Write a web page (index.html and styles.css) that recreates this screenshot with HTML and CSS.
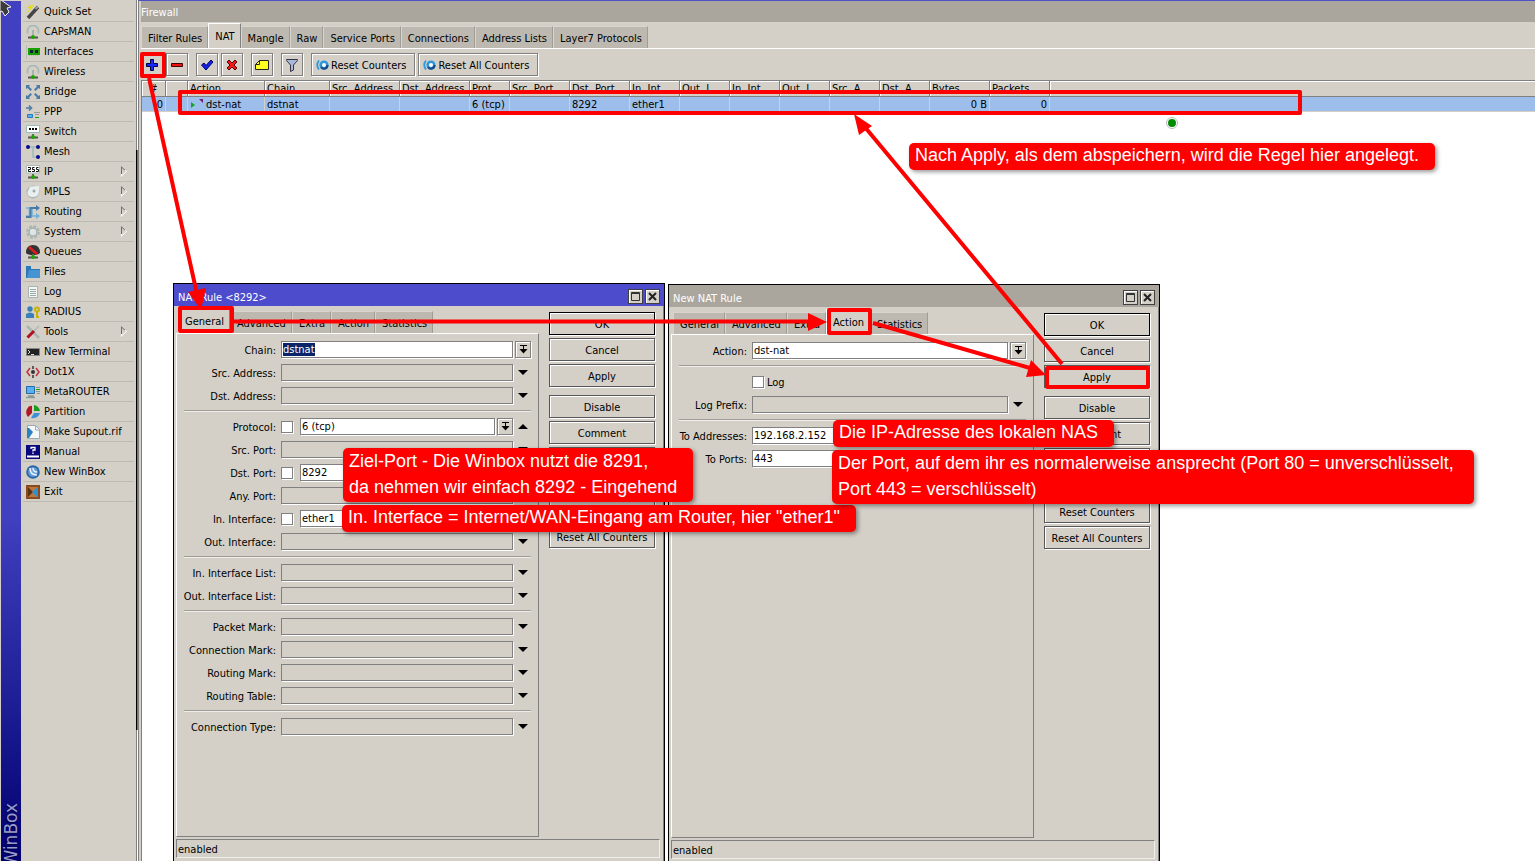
FILE: index.html
```html
<!DOCTYPE html>
<html lang="de">
<head>
<meta charset="utf-8">
<title>WinBox - Firewall NAT</title>
<link rel="stylesheet" href="styles.css">
</head>
<body>
<svg class="defs" aria-hidden="true">
  <defs>
    <g id="stand"><path d="M2 12.500h10" stroke="#555" stroke-width="2"/><path d="M7 9v3" stroke="#666" stroke-width="2"/><circle cx="7" cy="12" r="2" fill="#1fa400"/></g>
    <g id="antenna"><path d="M1.500 8.500V6a5.500 5.500 0 0 1 11 0v2.500" fill="none" stroke="#a9b9b9" stroke-width="1.800"/><path d="M7 5v5" stroke="#9aa" stroke-width="1.500"/><path d="M2 12.500h10" stroke="#555" stroke-width="2"/><circle cx="7" cy="12" r="2" fill="#1fa400"/></g>
    <g id="swirl"><path d="M3 1.500Q-.5 6 3 10.500" fill="none" stroke="#2b9be0" stroke-width="1.800"/><circle cx="8" cy="6" r="3.300" fill="#fff" stroke="#2f96dc" stroke-width="2.600"/><path d="M5 8a3.500 3.500 0 0 0 6.500-2" fill="none" stroke="#164a8c" stroke-width="2"/></g>
    <g id="drop"><path d="M1 .5h7M4.500 1v4" fill="none" stroke="#000"/><path d="M4 2h1v3H4z"/><path d="M.5 4h8L4.500 8.500z"/></g>
  </defs>
</svg>
<div class="desktop">
  <div class="brand"><span>WinBox</span></div>
  <nav class="menu">
    <button><svg viewBox="0 0 14 14"><path d="M2 13 12 2" stroke="#444" stroke-width="3.500"/><path d="M9.500 4 12 1.500" stroke="#999" stroke-width="2"/><path d="M4 0v5M1.500 2.500h5M1 7l2-1M7 0l-1 1" stroke="#e3dc00" stroke-width="1.300"/></svg>Quick Set</button>
    <button><svg viewBox="0 0 14 14"><use href="#antenna"/></svg>CAPsMAN</button>
    <button><svg viewBox="0 0 14 14"><path d="M.5 0v14" stroke="#b5bcbc"/><path d="M2 3h12v7H2z" fill="#18a000"/><path d="M4 5h3v3H4zM9 5h3v3H9z" fill="#123"/><path d="M3 10.500h10" stroke="#d8c800" stroke-dasharray="1 1"/></svg>Interfaces</button>
    <button><svg viewBox="0 0 14 14"><use href="#antenna"/></svg>Wireless</button>
    <button><svg viewBox="0 0 14 14"><path d="M0 0h4L3 1.500 6 4.500 4.500 6 1.500 3 0 4zM14 0h-4l1 1.500-3 3L9.500 6l3-3L14 4zM0 14h4l-1-1.500 3-3L4.500 8l-3 3L0 10zM14 14h-4l1-1.500-3-3L9.500 8l3 3 1.500-1z" fill="#4a7aa6"/></svg>Bridge</button>
    <button><svg viewBox="0 0 14 14"><path d="M0 3h4M3 .5 5.500 3 3 5.500" fill="none" stroke="#4a7aa6" stroke-width="1.600"/><path d="M1.500 9.500h5v3h-5z" fill="#5ab0e8" stroke="#2a78b8"/><path d="M8 7.500h6M9 9.500h4" stroke="#999"/><path d="M9 12.500h4" stroke="#1fa400"/></svg>PPP</button>
    <button><svg viewBox="0 0 14 14"><path d="M.5.5h13v7H.5z" fill="#fff" stroke="#9bb"/><path d="M3 4h8" stroke="#000" stroke-width="2" stroke-dasharray="2 1"/><use href="#stand"/></svg>Switch</button>
    <button><svg viewBox="0 0 14 14"><path d="M2 2h10M7 2v10h5" fill="none" stroke="#9bb" stroke-width="1.500"/><circle cx="2" cy="2" r="2" fill="#0a0a90"/><circle cx="12" cy="2" r="2" fill="#0a0a90"/><circle cx="12" cy="12" r="2" fill="#0a0a90"/></svg>Mesh</button>
    <button><svg viewBox="0 0 14 14"><path d="M.5.5h13v7.500H.5z" fill="#fff" stroke="#abb"/><path d="M2 2.500h2.500v2h-2v2H5M8.500 2.500h-2v2h2v2H6M12.500 2.500h-2v2h2v2H10" fill="none" stroke="#111"/><use href="#stand"/></svg>IP<span class="more"></span></button>
    <button><svg viewBox="0 0 14 14"><circle cx="7" cy="7" r="6.500" fill="#a9b5b5"/><path d="M4 1.500 13 1v6a6 6 0 0 1-6 5Q1 12 1.500 7z" fill="#e9eeee"/><circle cx="8" cy="6" r="1.500" fill="#9aa"/></svg>MPLS<span class="more"></span></button>
    <button><svg viewBox="0 0 14 14"><path d="M0 3h3.500v8H0M6 3v8h5" fill="none" stroke="#88b8d8" stroke-width="2"/><path d="M0 12h4.500V3H10" fill="none" stroke="#4a7aa6" stroke-width="2"/><path d="M10 0l4 3-4 3z" fill="#4a7aa6"/><path d="M10 8l4 3-4 3z" fill="#6cb0dc"/></svg>Routing<span class="more"></span></button>
    <button><svg viewBox="0 0 14 14"><circle cx="7" cy="7" r="5.800" fill="none" stroke="#a9b5b5" stroke-width="2" stroke-dasharray="3 1.500"/><circle cx="7" cy="7" r="4" fill="#e0e4e2" stroke="#9fadad" stroke-width="1.300"/></svg>System<span class="more"></span></button>
    <button><svg viewBox="0 0 14 14"><path d="M0 8Q0 0 7 0t7 8q-2 2-7 2T0 8z" fill="#333"/><path d="M3 2l8 7" stroke="#e01c1c" stroke-width="2.500"/><use href="#stand"/></svg>Queues</button>
    <button><svg viewBox="0 0 14 14"><path d="M0 1h5v3h9v9H0z" fill="#2a78b8"/><path d="M3 5h11v8H1z" fill="#4593d0"/></svg>Files</button>
    <button><svg viewBox="0 0 14 14"><path d="M2.500 1.500h9v11h-9z" fill="#f4f6f6" stroke="#a9b5b5"/><path d="M4 4.500h6M4 6.500h6M4 8.500h6M4 10.500h6" stroke="#9aa"/></svg>Log</button>
    <button><svg viewBox="0 0 14 14"><circle cx="4" cy="4" r="2.700" fill="#3a80b8"/><path d="M0 13V9q4-3 8 0v4z" fill="#3a80b8"/><circle cx="11" cy="4.500" r="2" fill="none" stroke="#c8b400" stroke-width="2"/><path d="M11 7v6M11 12h2" stroke="#c8b400" stroke-width="2"/></svg>RADIUS</button>
    <button><svg viewBox="0 0 14 14"><path d="M1 1l5 5 7 7" stroke="#a9b5b5" stroke-width="2.500"/><path d="M13 1 8 6" stroke="#b4bebe" stroke-width="2"/><path d="M8 6 1.500 12.500" stroke="#b01020" stroke-width="3"/></svg>Tools<span class="more"></span></button>
    <button><svg viewBox="0 0 14 14"><path d="M.5 3.500h13v7H.5z" fill="#222" stroke="#888"/><path d="M2 5l2 2-2 2M5 9.500h3" fill="none" stroke="#ddd"/></svg>New Terminal</button>
    <button><svg viewBox="0 0 14 14"><path d="M4 3 1 7l3 4M10 3l3 4-3 4" fill="none" stroke="#c03040" stroke-width="1.500"/><path d="M7 1v3M7 10v3" stroke="#333" stroke-width="1.500"/><circle cx="7" cy="7" r="2" fill="#333"/></svg>Dot1X</button>
    <button><svg viewBox="0 0 14 14"><path d="M.5 1.500h8v7h-8z" fill="#58b0f0" stroke="#2468a8"/><path d="M2 11h6M0 12.500h9" stroke="#8a9a9a" stroke-width="1.500"/><path d="M10 2.500h4M10 6.500h4M11 8.500h3" stroke="#8a9a9a"/><path d="M10 4.500h4" stroke="#1fa400"/></svg>MetaROUTER</button>
    <button><svg viewBox="0 0 14 14"><path d="M6 1v7l-4 4Q-1 8 1 4t5-3z" fill="#b01828"/><path d="M8 0q5 1 6 6H8z" fill="#1c9c1c"/><path d="M8 8h6q-2 6-9 5z" fill="#3c90d8"/></svg>Partition</button>
    <button><svg viewBox="0 0 14 14"><path d="M1.500.5h8l4 4v9h-12z" fill="#f4f8f8" stroke="#9ab"/><path d="M1 3h2l4 4-4 6H1z" fill="#2a80c0"/><path d="M9.500 1v4h4" fill="none" stroke="#9ab"/></svg>Make Supout.rif</button>
    <button><svg viewBox="0 0 14 14"><path d="M0 0h14v14H0z" fill="#08087c"/><path d="M1 11.500h12" stroke="#fff" stroke-width="2"/><path d="M5 4V2.500h4V5H7v1.500M7 7.500V9" fill="none" stroke="#fff" stroke-width="1.300"/></svg>Manual</button>
    <button><svg viewBox="0 0 14 14"><circle cx="7" cy="7" r="6.800" fill="#2a68a8"/><circle cx="7" cy="7" r="4.800" fill="#68a0d8"/><path d="M4 3q0 7 7 7M7 3q0 4 4 4" fill="none" stroke="#eef" stroke-width="1.500"/></svg>New WinBox</button>
    <button><svg viewBox="0 0 14 14"><path d="M0 0h14v14H0z" fill="#8a4a1c"/><path d="M2 2h10v10H2z" fill="#b87840"/><path d="M2 2l5 5-5 5" fill="#5c3010"/><path d="M12 2v11L6 7z" fill="#2e90d0"/></svg>Exit</button>
  </nav>
  <div class="splitter"><i></i></div>

  <main class="firewall">
    <h1 class="title">Firewall</h1>
    <div class="tabs" role="tablist">
      <button role="tab">Filter Rules</button><button role="tab" class="on" aria-selected="true">NAT</button><button role="tab">Mangle</button><button role="tab">Raw</button><button role="tab">Service Ports</button><button role="tab">Connections</button><button role="tab">Address Lists</button><button role="tab">Layer7 Protocols</button>
    </div>
    <div class="toolbar">
      <button class="tool" aria-label="Add"><svg viewBox="0 0 14 14"><path d="M5.500 1.500h3v4h4v3h-4v4h-3v-4h-4v-3h4z" fill="#1428ff" stroke="#000040"/></svg></button>
      <button class="tool" aria-label="Remove"><svg viewBox="0 0 14 14"><path d="M1.500 5.500h11v3h-11z" fill="#f01010" stroke="#400"/></svg></button>
      <button class="tool group" aria-label="Enable"><svg viewBox="0 0 14 14"><path d="M1.500 7 4 5l2 2.500L11 2l2 2-7 8z" fill="#1020f0" stroke="#000060"/></svg></button>
      <button class="tool" aria-label="Disable"><svg viewBox="0 0 14 14"><path d="M2 4l2-2 3 3 3-3 2 2-3 3 3 3-2 2-3-3-3 3-2-2 3-3z" fill="#f01818" stroke="#500"/></svg></button>
      <button class="tool group" aria-label="Comment"><svg viewBox="0 0 14 14"><path d="M4.500 2.500h9v9H.5v-5z" fill="#ffff20" stroke="#222"/><path d="M4.500 2.500v4h-4" fill="none" stroke="#222"/></svg></button>
      <button class="tool group" aria-label="Filter"><svg viewBox="0 0 14 14"><path d="M1.500 1.500h11v1L8.500 7v5l-3 1.500V7l-4-4.500z" fill="#a8b8d8" stroke="#334"/></svg></button>
      <button class="tool wide group"><svg viewBox="0 0 14 12"><use href="#swirl"/></svg>Reset Counters</button>
      <button class="tool wide"><svg viewBox="0 0 14 12"><use href="#swirl"/></svg>Reset All Counters</button>
    </div>
    <div class="list">
      <table>
        <colgroup><col class="c-num"><col class="c-flag"><col class="c-action"><col class="c-chain"><col class="c-addr"><col class="c-addr"><col class="c-prot"><col class="c-port"><col class="c-port"><col class="c-if"><col class="c-if"><col class="c-if"><col class="c-if"><col class="c-if"><col class="c-if"><col class="c-port"><col class="c-port"><col></colgroup>
        <thead><tr><th class="num">#</th><th></th><th>Action</th><th>Chain</th><th>Src. Address</th><th>Dst. Address</th><th>Prot...</th><th>Src. Port</th><th>Dst. Port</th><th>In. Int...</th><th>Out. I...</th><th>In. Int...</th><th>Out. I...</th><th>Src. A...</th><th>Dst. A...</th><th>Bytes</th><th>Packets</th><th></th></tr></thead>
        <tbody><tr><td class="num">0</td><td></td><td><svg class="rule-icon" viewBox="0 0 14 12"><path d="M1 4l4 3-4 3z" fill="#10a820"/><path d="M7.500 1v10" stroke="#b9b9b9"/><path d="M9 1h4v4z" fill="#702070"/></svg>dst-nat</td><td>dstnat</td><td></td><td></td><td>6 (tcp)</td><td></td><td>8292</td><td>ether1</td><td></td><td></td><td></td><td></td><td></td><td class="num">0 B</td><td class="num">0</td><td></td></tr></tbody>
      </table>
    </div>
  </main>

  <section class="dialog rule">
    <header class="bar"><h2>NAT Rule &lt;8292&gt;</h2><button aria-label="Maximize"><svg viewBox="0 0 13 13"><path d="M2.500 2.500h8v8h-8zM2 3.500h9" fill="none" stroke="#333"/></svg></button><button aria-label="Close"><svg viewBox="0 0 13 13"><path d="M3 3l7 7M10 3l-7 7" stroke="#222" stroke-width="2"/></svg></button></header>
    <div class="content">
      <div class="left">
        <div class="tabs" role="tablist"><button role="tab" class="on" aria-selected="true">General</button><button role="tab">Advanced</button><button role="tab">Extra</button><button role="tab">Action</button><button role="tab">Statistics</button></div>
        <form class="page">
          <div class="row"><label for="chain">Chain:</label><input type="text" id="chain" value="dstnat" autofocus><button type="button" class="pick" aria-label="Choose chain"><svg viewBox="0 0 9 9"><use href="#drop"/></svg></button></div>
          <div class="row"><label for="srca">Src. Address:</label><input type="text" id="srca" class="off"><button type="button" class="arrow" aria-label="Open"></button></div>
          <div class="row"><label for="dsta">Dst. Address:</label><input type="text" id="dsta" class="off"><button type="button" class="arrow" aria-label="Open"></button></div>
          <hr>
          <div class="row"><label for="proto">Protocol:</label><input type="checkbox" aria-label="Not protocol"><input type="text" id="proto" value="6 (tcp)"><button type="button" class="pick" aria-label="Choose protocol"><svg viewBox="0 0 9 9"><use href="#drop"/></svg></button><button type="button" class="arrow up" aria-label="Close"></button></div>
          <div class="row"><label for="srcp">Src. Port:</label><input type="text" id="srcp" class="off"><button type="button" class="arrow" aria-label="Open"></button></div>
          <div class="row"><label for="dstp">Dst. Port:</label><input type="checkbox" aria-label="Not port"><input type="text" id="dstp" value="8292"><button type="button" class="arrow up" aria-label="Close"></button></div>
          <div class="row"><label for="anyp">Any. Port:</label><input type="text" id="anyp" class="off"><button type="button" class="arrow" aria-label="Open"></button></div>
          <div class="row"><label for="inif">In. Interface:</label><input type="checkbox" aria-label="Not interface"><input type="text" id="inif" value="ether1"><button type="button" class="arrow up" aria-label="Close"></button></div>
          <div class="row"><label for="outif">Out. Interface:</label><input type="text" id="outif" class="off"><button type="button" class="arrow" aria-label="Open"></button></div>
          <hr>
          <div class="row"><label for="inl">In. Interface List:</label><input type="text" id="inl" class="off"><button type="button" class="arrow" aria-label="Open"></button></div>
          <div class="row"><label for="outl">Out. Interface List:</label><input type="text" id="outl" class="off"><button type="button" class="arrow" aria-label="Open"></button></div>
          <hr>
          <div class="row"><label for="pm">Packet Mark:</label><input type="text" id="pm" class="off"><button type="button" class="arrow" aria-label="Open"></button></div>
          <div class="row"><label for="cm">Connection Mark:</label><input type="text" id="cm" class="off"><button type="button" class="arrow" aria-label="Open"></button></div>
          <div class="row"><label for="rm">Routing Mark:</label><input type="text" id="rm" class="off"><button type="button" class="arrow" aria-label="Open"></button></div>
          <div class="row"><label for="rt">Routing Table:</label><input type="text" id="rt" class="off"><button type="button" class="arrow" aria-label="Open"></button></div>
          <hr>
          <div class="row"><label for="ct">Connection Type:</label><input type="text" id="ct" class="off"><button type="button" class="arrow" aria-label="Open"></button></div>
        </form>
      </div>
      <div class="actions"><button class="default">OK</button><button>Cancel</button><button>Apply</button><button class="next">Disable</button><button>Comment</button><button aria-label="Copy"></button><button aria-label="Remove"></button><button aria-label="Reset Counters"></button><button>Reset All Counters</button></div>
    </div>
    <footer>enabled</footer>
  </section>

  <section class="dialog fresh">
    <header class="bar"><h2>New NAT Rule</h2><button aria-label="Maximize"><svg viewBox="0 0 13 13"><path d="M2.500 2.500h8v8h-8zM2 3.500h9" fill="none" stroke="#333"/></svg></button><button aria-label="Close"><svg viewBox="0 0 13 13"><path d="M3 3l7 7M10 3l-7 7" stroke="#222" stroke-width="2"/></svg></button></header>
    <div class="content">
      <div class="left">
        <div class="tabs" role="tablist"><button role="tab">General</button><button role="tab">Advanced</button><button role="tab">Extra</button><button role="tab" class="on" aria-selected="true">Action</button><button role="tab">Statistics</button></div>
        <form class="page">
          <div class="row"><label for="act">Action:</label><input type="text" id="act" value="dst-nat"><button type="button" class="pick" aria-label="Choose action"><svg viewBox="0 0 9 9"><use href="#drop"/></svg></button></div>
          <hr>
          <div class="row check"><input type="checkbox" id="log"><label for="log">Log</label></div>
          <div class="row"><label for="lp">Log Prefix:</label><input type="text" id="lp" class="off"><button type="button" class="arrow" aria-label="Open"></button></div>
          <hr>
          <div class="row"><label for="toa">To Addresses:</label><input type="text" id="toa" value="192.168.2.152"><button type="button" class="arrow up" aria-label="Close"></button></div>
          <div class="row"><label for="top">To Ports:</label><input type="text" id="top" value="443"><button type="button" class="arrow up" aria-label="Close"></button></div>
        </form>
      </div>
      <div class="actions"><button class="default">OK</button><button>Cancel</button><button>Apply</button><button class="next">Disable</button><button>Comment</button><button aria-label="Copy"></button><button aria-label="Remove"></button><button>Reset Counters</button><button>Reset All Counters</button></div>
    </div>
    <footer>enabled</footer>
  </section>

  <svg class="marks" aria-hidden="true">
    <g fill="none" stroke="#f00" stroke-width="4" stroke-linejoin="round">
      <path d="M142 54h22v22h-22zM180 92h1120v21H180zM180 308h52v23h-52zM829 310h41v23h-41zM1047 368h101v19h-101z"/>
      <path d="M149 78 197 294M234 321.500H810M873 323 1030 368M1062 364 864 126"/>
    </g>
    <path d="M188 292l18-4-5 22zM808 313v18l19-9zM1031 360l-5 17 20-2zM854 114l18 12-13 9z" fill="#f00"/>
    <circle cx="1172" cy="123" r="5" fill="#008c00" stroke="#fff" stroke-width="2"/><circle cx="1172" cy="123" r="5.500" fill="none" stroke="#bbb"/>
    <path d="M0 0h1l10 7-4 1 2 4-4 4-3-5-2 1z" fill="#3c3c3c" stroke="#eee"/>
  </svg>
  <p class="note n1">Nach Apply, als dem abspeichern, wird die Regel hier angelegt.</p>
  <p class="note n2">Ziel-Port - Die Winbox nutzt die 8291,<br>da nehmen wir einfach 8292 - Eingehend</p>
  <p class="note n3">In. Interface = Internet/WAN-Eingang am Router, hier "ether1"</p>
  <p class="note n4">Die IP-Adresse des lokalen NAS</p>
  <p class="note n5">Der Port, auf dem ihr es normalerweise ansprecht (Port 80 = unverschlüsselt,<br>Port 443 = verschlüsselt)</p>
</div>
<script>
  document.getElementById("chain").select();
</script>
</body>
</html>
```

FILE: styles.css
```css
* { box-sizing: border-box; }

body {
  margin: 0;
  overflow: hidden;
  background: #d4d0c8;
  color: #000;
  font: 11px/13px "DejaVu Sans Condensed", "DejaVu Sans", sans-serif;
}

button, input {
  margin: 0;
  padding: 0;
  border: 0;
  border-radius: 0;
  background: none;
  color: inherit;
  font: inherit;
}

h1, h2 { margin: 0; font: inherit; }
.defs { position: absolute; width: 0; height: 0; }

.desktop {
  position: relative;
  display: flex;
  height: 100vh;
  overflow: hidden;
}

/* side bar */
.brand {
  display: flex;
  flex: none;
  flex-direction: column;
  justify-content: flex-end;
  align-items: center;
  width: 20px;
  margin: 1px 0 0 1px;
  background: linear-gradient(#4040c0 60%, #000070);
  overflow: hidden;
}
.brand span {
  margin-bottom: -6px;
  color: #9c9ccc;
  font: 17px/20px "DejaVu Sans", sans-serif;
  text-shadow: -1px -1px 1px #000040;
  writing-mode: vertical-rl;
  transform: rotate(180deg);
}

.menu {
  display: flex;
  flex: none;
  flex-direction: column;
  width: 115px;
  padding: 2px 2px 0 2px;
}
.menu button {
  display: flex;
  align-items: center;
  gap: 4px;
  height: 20px;
  padding: 0 7px 0 3px;
  border-bottom: 1px solid #bdbab4;
  white-space: nowrap;
  text-align: left;
}
.menu svg { flex: none; width: 14px; height: 14px; }
.more {
  width: 6px;
  height: 11px;
  margin-left: auto;
  clip-path: polygon(0 0, 100% 50%, 0 100%, 0 0, 1px 2px, 1px 9px, 5px 50%, 1px 2px);
  background: linear-gradient(135deg, #707070 50%, #fff 50%);
}

.splitter {
  display: flex;
  flex: none;
  flex-direction: column;
  width: 2px;
  border-left: 1px solid #808080;
  background: #fff;
}
.splitter i {
  height: 580px;
  margin: 150px 0 0 -1px;
  border-left: 1px solid #000;
  background: #6868d0;
}

/* firewall window */
.firewall {
  display: flex;
  flex: 1;
  flex-direction: column;
  min-width: 0;
  border-top: 1px solid #5050c8;
  border-left: 1px solid #808080;
  padding-left: 2px;
}
.title {
  height: 21px;
  padding: 0;
  background: #aaa69e;
  color: #fff;
  line-height: 24px;
}
.tabs { display: flex; align-items: flex-end; }
.tabs button {
  height: 22px;
  padding: 2px 5px 0 6px;
  border: solid #d8d5ce;
  border-width: 1px 0 0 1px;
  border-right: 1px solid #a09c96;
  background: #bdb9b1;
  white-space: nowrap;
}
.tabs .on {
  height: 25px;
  padding-top: 0;
  border-color: #fff #808080 #fff #fff;
  background: #d4d0c8;
}
.firewall .tabs { height: 27px; border-bottom: 1px solid #fff; }

.toolbar {
  display: flex;
  gap: 3px;
  height: 31px;
  padding-top: 4px;
}
.tool {
  display: flex;
  align-items: center;
  justify-content: center;
  gap: 1px;
  flex: none;
  width: 22px;
  height: 23px;
  border: 1px solid #808080;
  box-shadow: inset 1px 1px #fff, 1px 1px #fff;
  white-space: nowrap;
}
.tool svg { width: 14px; height: 14px; }
.group { margin-left: 5px; }
.wide { width: auto; padding: 1px 8px 0 4px; }

.list { flex: 1; border-top: 1px solid #808080; background: #fff; border-left: 1px solid #808080; }
table { width: 100%; border-spacing: 0; table-layout: fixed; }
th, td {
  padding: 0 2px;
  font-weight: normal;
  text-align: left;
  white-space: nowrap;
  overflow: hidden;
}
th { height: 16px; border-right: 1px solid #808080; border-bottom: 1px solid #808080; background: #d4d0c8; box-shadow: inset 1px 1px #fff; }
td { height: 15px; border-right: 1px solid #d4d0c8; border-bottom: 1px solid #d4d0c8; background: #9dbeea; }
th:last-child, td:last-child { border-right: 0; }
td.num { text-align: right; }
th.num { text-align: center; }
.rule-icon { width: 14px; height: 12px; margin: 0 2px 0 0; vertical-align: top; }
.c-num { width: 24px; }
.c-flag { width: 22px; }
.c-action { width: 77px; }
.c-chain { width: 65px; }
.c-addr { width: 70px; }
.c-prot { width: 40px; }
.c-port { width: 60px; }
.c-if { width: 50px; }

/* rule dialogs */
.dialog {
  position: absolute;
  display: flex;
  flex-direction: column;
  width: 492px;
  border: solid #000;
  border-width: 1px 1px 0;
  background: #d4d0c8;
  box-shadow: inset -1px 0 #808080;
}
.rule { top: 283px; bottom: 0; left: 173px; }
.fresh { top: 284px; bottom: -1px; left: 668px; box-shadow: -3px 0 #fff, inset -1px 0 #808080; }
.bar {
  display: flex;
  align-items: center;
  gap: 2px;
  height: 22px;
  padding: 2px 4px 0;
  background: #4c4ccc;
  color: #fff;
}
.fresh .bar { background: #aaa69e; }
.bar h2 { flex: 1; padding-top: 2px; }
.bar button {
  width: 15px;
  height: 15px;
  border: 1px solid #404040;
  background: #d4d0c8;
  box-shadow: inset 1px 1px #fff;
}
.bar svg { display: block; width: 13px; height: 13px; }
.content { display: flex; flex: 1; gap: 10px; padding: 0 9px 0 2px; }
.left { display: flex; flex: 1; flex-direction: column; }
.left .tabs { height: 27px; padding-left: 2px; }
.page {
  flex: 1;
  padding: 4px 7px 0;
  border: 1px solid #808080;
  border-top-color: #fff;
  border-left-color: #fff;
}
.row { display: flex; align-items: center; height: 23px; gap: 2px; }
.row label {
  display: flex;
  flex: none;
  justify-content: flex-end;
  width: 92px;
  margin-right: 3px;
  padding-top: 1px;
  white-space: nowrap;
}
.fresh label { width: 68px; }
.fresh .check { padding-left: 73px; }
.check label { width: auto; margin: 0 1px; }
input[type="text"] {
  flex: 1;
  min-width: 0;
  height: 17px;
  padding: 0 1px;
  border: 1px solid #808080;
  outline: 0;
  background: #fff;
  box-shadow: 1px 1px #fff;
}
input.off { background: #d4d0c8; }
input::selection { background: #0a246a; color: #fff; }
input[type="checkbox"] {
  flex: none;
  appearance: none;
  width: 12px;
  height: 12px;
  border: 1px solid #808080;
  background: #fff;
  box-shadow: 1px 1px #fff;
}
input[type="checkbox"] + input { margin-left: 5px; }
.pick {
  display: flex;
  align-items: center;
  justify-content: center;
  width: 16px;
  height: 17px;
  border: 1px solid #808080;
  box-shadow: inset 1px 1px #fff, 1px 1px #fff;
}
.pick svg { width: 9px; height: 9px; }
.arrow { display: flex; justify-content: center; align-items: center; width: 16px; height: 17px; }
.arrow::before { content: ""; border: solid transparent; border-width: 5px 5px 0; border-top-color: #000; }
.up::before { border-width: 0 5px 5px; border-bottom-color: #000; }
hr { height: 2px; margin: 3px 0; border: 0; border-top: 1px solid #a09c96; border-bottom: 1px solid #f0eeea; }

.actions { display: flex; flex-direction: column; gap: 3px; width: 106px; padding-top: 6px; }
.actions button { height: 23px; padding-top: 1px; border: 1px solid #585858; box-shadow: inset 1px 1px #fff, 1px 1px #fff; }
.actions .default { border-color: #000; }
.actions .next { margin-top: 5px; }
footer {
  height: 19px;
  margin: 2px 4px 3px 2px;
  padding: 3px 1px 0;
  border: 1px solid;
  border-color: #808080 #f0eeea #f0eeea #808080;
}

/* annotations over the windows */
.marks { position: absolute; inset: 0; width: 100%; height: 100%; pointer-events: none; }
.note {
  position: absolute;
  margin: 0;
  padding: 0 16px 3px 6px;
  border-radius: 5px;
  background: #f00;
  box-shadow: 2px 2px 4px rgba(0, 0, 0, .4);
  color: #fff;
  font: 18px/24px "Liberation Sans", Arial, sans-serif;
  white-space: nowrap;
}
.n1 { top: 143px; left: 909px; }
.n2 { top: 448px; left: 343px; padding-bottom: 2px; line-height: 26px; }
.n3 { top: 505px; left: 342px; }
.n4 { top: 420px; left: 833px; }
.n5 { top: 450px; left: 832px; padding-right: 20px; padding-bottom: 2px; line-height: 26px; }
```
